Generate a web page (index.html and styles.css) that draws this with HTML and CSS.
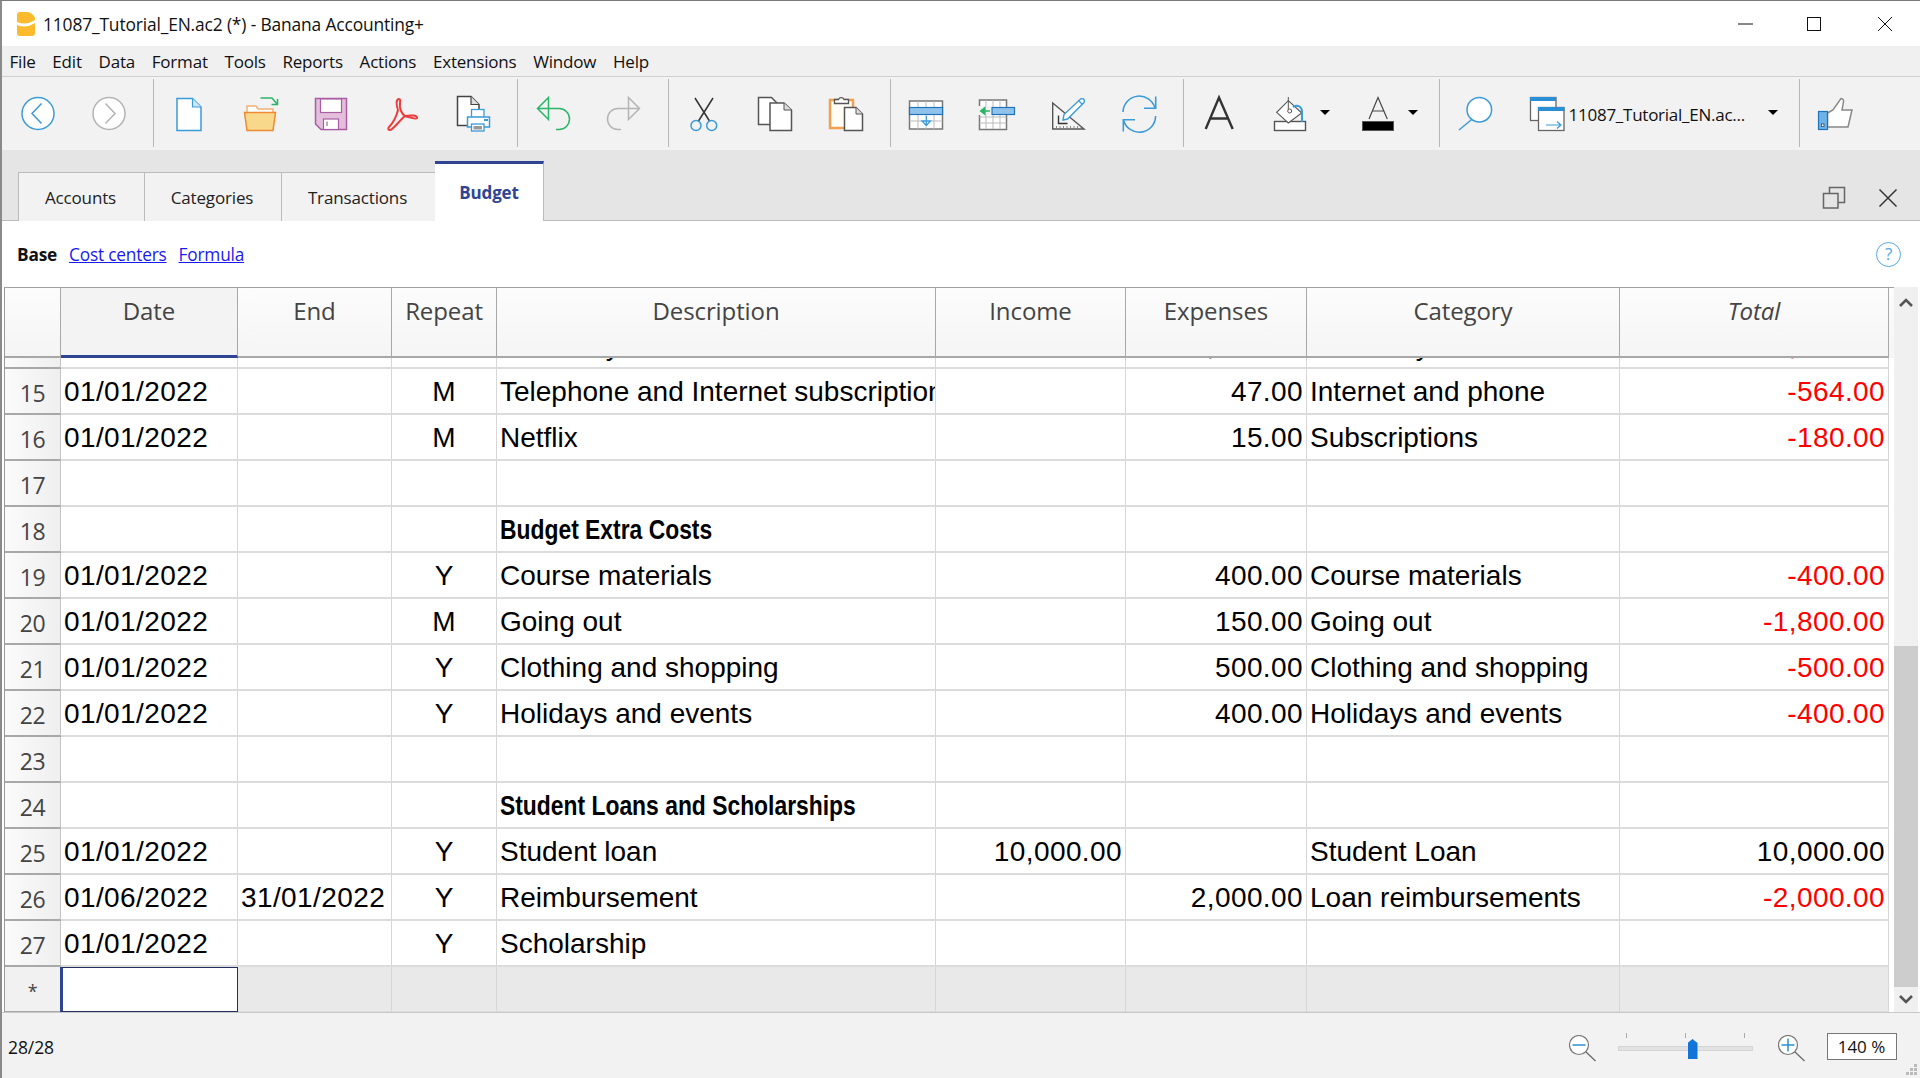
FILE: index.html
```html
<!DOCTYPE html>
<html lang="en">
  <head>
    <meta charset="UTF-8" />
    <title>11087_Tutorial_EN.ac2 (*) - Banana Accounting+</title>
    <link rel="stylesheet" href="styles.css">
  </head>
  <body>
    <div class="window">
      <!-- title bar -->
      <div class="titlebar">
        <svg class="logo" width="20" height="26" viewBox="0 0 20 26">
          <path d="M1 4 Q1 1 4 1 H11 Q14 1 16 3 L18 5 Q19 6 19 8 V22 Q19 25 16 25 H4 Q1 25 1 22 Z" fill="#fbbb2c" />
          <path d="M1 11 Q10 15 19 9 V12 Q10 18 1 14 Z" fill="#fff" />
        </svg>
        <span class="title">11087_Tutorial_EN.ac2 (*) - Banana Accounting+</span>
        <div class="winbtns">
          <svg width="16" height="16" viewBox="0 0 16 16"><path d="M0 8 H15" stroke="#111" fill="none" /></svg>
          <svg width="16" height="16" viewBox="0 0 16 16"><rect x="1.5" y="1.5" width="13" height="13" stroke="#111" fill="none" /></svg>
          <svg width="16" height="16" viewBox="0 0 16 16"><path d="M1 1 L15 15 M15 1 L1 15" stroke="#111" fill="none" /></svg>
        </div>
      </div>

      <!-- menu -->
      <div class="menubar">
        <span>File</span><span>Edit</span><span>Data</span><span>Format</span><span>Tools</span><span>Reports</span><span>Actions</span><span>Extensions</span><span>Window</span><span>Help</span>
      </div>

      <!-- toolbar -->
      <div class="toolbar">
        <div class="group first">
          <div class="tool"><svg width="44" height="44" viewBox="0 0 44 44"><circle cx="22" cy="22.5" r="16" fill="#fff" stroke="#3a9bd9" stroke-width="1.5" /><path d="M25.5 12.5 L16 22.5 L25.5 32.5" fill="none" stroke="#3a9bd9" stroke-width="1.5" /></svg></div>
          <div class="tool"><svg width="44" height="44" viewBox="0 0 44 44"><circle cx="22" cy="22.5" r="16" fill="#fff" stroke="#b3b3b3" stroke-width="1.5" /><path d="M18.5 12.5 L28 22.5 L18.5 32.5" fill="none" stroke="#b3b3b3" stroke-width="1.5" /></svg></div>
        </div>
        <div class="group">
          <div class="tool"><svg width="44" height="44" viewBox="0 0 44 44"><path d="M10 7.5 H25.5 L34 16 V39.5 H10 Z" fill="#fff" stroke="#3a9bd9" stroke-width="1.5" /><path d="M25.5 7.5 V16 H34" fill="#cfe6f7" stroke="#3a9bd9" stroke-width="1.2" /></svg></div>
          <div class="tool"><svg width="44" height="44" viewBox="0 0 44 44"><path d="M9 21.5 V15 H18 L20 18 H35 V21.5" fill="#fff" stroke="#f2b27a" stroke-width="1.5" /><path d="M6.5 21.5 H37.5 L35 39.5 H9 Z" fill="#f8d98c" stroke="#ee8a33" stroke-width="1.5" /><path d="M22.5 7 H34 L39.5 13.5 M39.5 8 V13.5 H33.5" fill="none" stroke="#2bb568" stroke-width="1.5" /></svg></div>
          <div class="tool"><svg width="44" height="44" viewBox="0 0 44 44"><path d="M6.5 7.5 H37.5 V38.5 H12 L6.5 33 Z" fill="#e3bfdc" stroke="#a85da5" stroke-width="1.5" /><rect x="11.5" y="8" width="21" height="13.5" fill="#fff" stroke="#a85da5" stroke-width="1.2" /><rect x="14.5" y="28" width="15" height="10.5" fill="#fff" stroke="#a85da5" stroke-width="1.2" /><path d="M18 30.5 V35" stroke="#999" stroke-width="1.5" /></svg></div>
          <div class="tool"><svg width="44" height="44" viewBox="0 0 44 44"><path d="M19 8 C16 8 16 14 18 19 C16 27 12 33 9 36 C7 39 10 40 12 38 C15 36 21 28 25 25 C29 26 36 29 37 27 C38 24 30 24 25 25 C22 23 19 18 20 12 C20.5 9 20 8 19 8 Z" fill="none" stroke="#ee3c3c" stroke-width="2" /></svg></div>
          <div class="tool"><svg width="44" height="44" viewBox="0 0 44 44"><path d="M6.5 5.5 H20 L28 13.5 V34.5 H6.5 Z" fill="#fff" stroke="#444" stroke-width="1.5" /><path d="M20 5.5 V13.5 H28" fill="#ddd" stroke="#444" stroke-width="1.2" /><rect x="20.5" y="18.5" width="12.5" height="8" fill="#fff" stroke="#3a9bd9" stroke-width="1.3" /><rect x="16.5" y="26" width="22" height="10" fill="#fff" stroke="#3a9bd9" stroke-width="1.5" /><rect x="20.5" y="33" width="12.5" height="7" fill="#fff" stroke="#3a9bd9" stroke-width="1.3" /><rect x="22.5" y="35" width="8.5" height="3.5" fill="#999" /><rect x="33" y="28" width="4" height="2" fill="#3a9bd9" /></svg></div>
        </div>
        <div class="group">
          <div class="tool"><svg width="44" height="44" viewBox="0 0 44 44"><path d="M17.5 6.5 L6.5 17.5 L17.5 28.5 Z M6.5 17.5 H28 A10.5 10.5 0 0 1 28 38.5 H25" fill="none" stroke="#2bb568" stroke-width="1.5" /></svg></div>
          <div class="tool"><svg width="44" height="44" viewBox="0 0 44 44"><path d="M26.5 6.5 L37.5 17.5 L26.5 28.5 Z M37.5 17.5 H16 A10.5 10.5 0 0 0 16 38.5 H19" fill="none" stroke="#b5b5b5" stroke-width="1.5" /></svg></div>
        </div>
        <div class="group">
          <div class="tool"><svg width="44" height="44" viewBox="0 0 44 44"><path d="M13 7 L27.5 30 M31 7 L16.5 30" fill="none" stroke="#333" stroke-width="1.5" /><circle cx="14" cy="34.5" r="5" fill="none" stroke="#3a9bd9" stroke-width="1.5" /><circle cx="29.7" cy="34.5" r="5" fill="none" stroke="#3a9bd9" stroke-width="1.5" /></svg></div>
          <div class="tool"><svg width="44" height="44" viewBox="0 0 44 44"><path d="M5.5 6.5 H18.5 L25 13 V33.5 H5.5 Z" fill="#fff" stroke="#555" stroke-width="1.5" /><path d="M17 12 H31 L38.5 19 V39.5 H17 Z" fill="#fff" stroke="#555" stroke-width="1.5" /><path d="M31 12 V19 H38.5" fill="#ddd" stroke="#555" /></svg></div>
          <div class="tool"><svg width="44" height="44" viewBox="0 0 44 44"><rect x="6" y="9" width="23" height="28" fill="#fffdf5" stroke="#f0a050" stroke-width="2.5" /><path d="M10.5 12.5 V8.5 H14.5 A3 3 0 0 1 20 8.5 H24.5 V12.5 Z" fill="#fff" stroke="#555" stroke-width="1.3" /><path d="M20.5 16.5 H32 L38.5 23 V39.5 H20.5 Z" fill="#fff" stroke="#555" stroke-width="1.5" /><path d="M32 16.5 V23 H38.5" fill="#ddd" stroke="#555" /></svg></div>
        </div>
        <div class="group">
          <div class="tool"><svg width="44" height="44" viewBox="0 0 44 44"><rect x="5.5" y="10" width="33" height="28" fill="#fff" stroke="#777" stroke-width="1.5" /><path d="M14 10 V38 M22 10 V38 M30 10 V38 M5.5 30 H38.5" stroke="#bbb" fill="none" /><rect x="5.5" y="16.5" width="33" height="7" fill="#8fc3ec" stroke="#1f74bb" stroke-width="1.2" /><rect x="18" y="25" width="8.5" height="11" fill="#fff" /><path d="M22.3 25 V34 M18 30 H26.5 L22.3 34.5 Z" fill="none" stroke="#3a9bd9" stroke-width="1.3" /></svg></div>
          <div class="tool"><svg width="44" height="44" viewBox="0 0 44 44"><rect x="4.5" y="9" width="27" height="29.5" fill="#fff" stroke="#777" stroke-width="1.5" /><path d="M11 9 V38 M18 9 V38 M25 9 V38 M4.5 26 H31.5 M4.5 32 H31.5" stroke="#bbb" fill="none" /><rect x="3" y="15" width="13" height="9" fill="#f2f2f2" /><rect x="17" y="16.5" width="22.5" height="7" fill="#8fc3ec" stroke="#1f74bb" stroke-width="1.2" /><path d="M15 20 H6 M10 16.5 L5.5 20 L10 23.5 Z" fill="#2bb568" stroke="#2bb568" stroke-width="1.3" /></svg></div>
          <div class="tool"><svg width="44" height="44" viewBox="0 0 44 44"><path d="M6.7 12 L38 38 H6.7 Z" fill="#f5f5f5" stroke="#555" stroke-width="1.4" /><path d="M12.5 24.5 V32.5 H21.5" fill="none" stroke="#333" stroke-width="1.4" /><path d="M10 36 H35" stroke="#888" stroke-dasharray="1 2.5" stroke-width="2" /><path d="M17 29 L18 23.5 L34.5 8 Q37 7 38 8.5 Q39 10 38 11.5 L21.5 28 Z" fill="#fff" stroke="#3a9bd9" stroke-width="1.4" /><path d="M33 10 L36.5 13.5" stroke="#3a9bd9" stroke-width="1.2" /></svg></div>
          <div class="tool"><svg width="44" height="44" viewBox="0 0 44 44"><path d="M6 21 A16.3 16.3 0 0 1 38 17 M38.6 25 A16.3 16.3 0 0 1 6.5 29 M38.7 5.5 V17.3 H27 M6.3 40.5 V28.7 H18" fill="none" stroke="#3a9bd9" stroke-width="1.6" /></svg></div>
        </div>
        <div class="group">
          <div class="tool"><svg width="44" height="44" viewBox="0 0 44 44"><path d="M8.7 38 L22 6.5 L35.7 38 M13 27.5 H31" fill="none" stroke="#333" stroke-width="2.4" /></svg></div>
          <div class="tool wide">
            <svg width="44" height="44" viewBox="0 0 44 44"><rect x="6.5" y="30.5" width="31" height="9" fill="#fff" stroke="#555" stroke-width="1.4" /><path d="M20.3 9.7 L33.7 22 L20.3 32 L8.7 21.3 Z" fill="#fff" stroke="#555" stroke-width="1.1" /><path d="M20.3 6 V19" stroke="#555" /><circle cx="21.7" cy="20" r="2" fill="#fff" stroke="#555" /><path d="M25 16 C30 13 34 16 34 21 V31" fill="none" stroke="#3a9bd9" stroke-width="2" /></svg>
            <span class="caret"></span>
          </div>
          <div class="tool wide">
            <svg width="44" height="44" viewBox="0 0 44 44"><path d="M13 28 L22 6.5 L31.3 28 M16 20 H28.5" fill="none" stroke="#444" stroke-width="1.2" /><rect x="6.5" y="30.5" width="31" height="9" fill="#000" stroke="#555" /></svg>
            <span class="caret"></span>
          </div>
        </div>
        <div class="group">
          <div class="tool"><svg width="44" height="44" viewBox="0 0 44 44"><circle cx="26.3" cy="18.7" r="12.3" fill="#fff" stroke="#3a9bd9" stroke-width="1.5" /><path d="M18.7 28.5 L6 39" stroke="#3a9bd9" stroke-width="1.5" /></svg></div>
          <div class="doccombo">
            <svg width="44" height="44" viewBox="0 0 44 44"><rect x="5.5" y="6.5" width="25.5" height="23" fill="#fff" stroke="#666" stroke-width="1.3" /><rect x="5" y="6" width="26" height="4" fill="#2b8fd6" /><rect x="13.5" y="16.5" width="25.5" height="23" fill="#fff" stroke="#666" stroke-width="1.3" /><rect x="13" y="16" width="26.5" height="4" fill="#2b8fd6" /><path d="M21 34 H36 M32 30.5 L36 34 L32 37.5" fill="none" stroke="#3a9bd9" stroke-width="1.2" /></svg>
            <span class="docname">11087_Tutorial_EN.ac...</span>
            <span class="caret"></span>
          </div>
        </div>
        <div class="group last">
          <div class="tool"><svg width="44" height="44" viewBox="0 0 44 44"><path d="M14.5 22 L20 19 L28 7.5 Q31 8 30.5 11 L29 19 H39 L35 36 H14.5 Z" fill="#fff" stroke="#888" stroke-width="1.5" /><rect x="5.5" y="20.5" width="9" height="18" fill="#6db3e8" stroke="#1f74bb" stroke-width="1.2" /><rect x="8.5" y="33" width="2.5" height="2.5" fill="#fff" stroke="#333" stroke-width=".7" /></svg></div>
        </div>
      </div>

      <!-- tabs -->
      <div class="tabbar">
        <div class="tab">Accounts</div>
        <div class="tab">Categories</div>
        <div class="tab">Transactions</div>
        <div class="tab active">Budget</div>
        <div class="tabtools">
          <svg width="24" height="24" viewBox="0 0 24 24"><path d="M7.5 7 V1.5 H22.5 V16.5 H16" fill="none" stroke="#666" stroke-width="1.5" /><rect x="1.5" y="7.5" width="14.5" height="14.5" fill="none" stroke="#666" stroke-width="1.5" /></svg>
          <svg width="20" height="20" viewBox="0 0 20 20"><path d="M1.5 1.5 L18.5 18.5 M18.5 1.5 L1.5 18.5" stroke="#333" stroke-width="1.5" fill="none" /></svg>
        </div>
      </div>

      <!-- views -->
      <div class="viewbar">
        <b>Base</b>
        <a href="#">Cost centers</a>
        <a href="#">Formula</a>
        <span class="help">?</span>
      </div>

      <!-- table -->
      <div class="sheet">
        <div class="grid">
          <div class="row head">
            <div class="cell gutter"></div>
            <div class="cell current">Date</div>
            <div class="cell">End</div>
            <div class="cell">Repeat</div>
            <div class="cell">Description</div>
            <div class="cell">Income</div>
            <div class="cell">Expenses</div>
            <div class="cell">Category</div>
            <div class="cell total">Total</div>
          </div>
          <div class="rows">
            <div class="scrolled">
              <div class="row"><div class="cell gutter">14</div><div class="cell date">01/01/2022</div><div class="cell date"></div><div class="cell mid">M</div><div class="cell">Electricity</div><div class="cell num"></div><div class="cell num">1,200.00</div><div class="cell">Electricity</div><div class="cell num neg">-14,400.00</div></div>
              <div class="row"><div class="cell gutter">15</div><div class="cell date">01/01/2022</div><div class="cell date"></div><div class="cell mid">M</div><div class="cell">Telephone and Internet subscription</div><div class="cell num"></div><div class="cell num">47.00</div><div class="cell">Internet and phone</div><div class="cell num neg">-564.00</div></div>
              <div class="row"><div class="cell gutter">16</div><div class="cell date">01/01/2022</div><div class="cell date"></div><div class="cell mid">M</div><div class="cell">Netflix</div><div class="cell num"></div><div class="cell num">15.00</div><div class="cell">Subscriptions</div><div class="cell num neg">-180.00</div></div>
              <div class="row"><div class="cell gutter">17</div><div class="cell"></div><div class="cell"></div><div class="cell"></div><div class="cell"></div><div class="cell"></div><div class="cell"></div><div class="cell"></div><div class="cell"></div></div>
              <div class="row"><div class="cell gutter">18</div><div class="cell"></div><div class="cell"></div><div class="cell"></div><div class="cell"><b class="section">Budget Extra Costs</b></div><div class="cell"></div><div class="cell"></div><div class="cell"></div><div class="cell"></div></div>
              <div class="row"><div class="cell gutter">19</div><div class="cell date">01/01/2022</div><div class="cell date"></div><div class="cell mid">Y</div><div class="cell">Course materials</div><div class="cell num"></div><div class="cell num">400.00</div><div class="cell">Course materials</div><div class="cell num neg">-400.00</div></div>
              <div class="row"><div class="cell gutter">20</div><div class="cell date">01/01/2022</div><div class="cell date"></div><div class="cell mid">M</div><div class="cell">Going out</div><div class="cell num"></div><div class="cell num">150.00</div><div class="cell">Going out</div><div class="cell num neg">-1,800.00</div></div>
              <div class="row"><div class="cell gutter">21</div><div class="cell date">01/01/2022</div><div class="cell date"></div><div class="cell mid">Y</div><div class="cell">Clothing and shopping</div><div class="cell num"></div><div class="cell num">500.00</div><div class="cell">Clothing and shopping</div><div class="cell num neg">-500.00</div></div>
              <div class="row"><div class="cell gutter">22</div><div class="cell date">01/01/2022</div><div class="cell date"></div><div class="cell mid">Y</div><div class="cell">Holidays and events</div><div class="cell num"></div><div class="cell num">400.00</div><div class="cell">Holidays and events</div><div class="cell num neg">-400.00</div></div>
              <div class="row"><div class="cell gutter">23</div><div class="cell"></div><div class="cell"></div><div class="cell"></div><div class="cell"></div><div class="cell"></div><div class="cell"></div><div class="cell"></div><div class="cell"></div></div>
              <div class="row"><div class="cell gutter">24</div><div class="cell"></div><div class="cell"></div><div class="cell"></div><div class="cell"><b class="section">Student Loans and Scholarships</b></div><div class="cell"></div><div class="cell"></div><div class="cell"></div><div class="cell"></div></div>
              <div class="row"><div class="cell gutter">25</div><div class="cell date">01/01/2022</div><div class="cell date"></div><div class="cell mid">Y</div><div class="cell">Student loan</div><div class="cell num">10,000.00</div><div class="cell num"></div><div class="cell">Student Loan</div><div class="cell num">10,000.00</div></div>
              <div class="row"><div class="cell gutter">26</div><div class="cell date">01/06/2022</div><div class="cell date">31/01/2022</div><div class="cell mid">Y</div><div class="cell">Reimbursement</div><div class="cell num"></div><div class="cell num">2,000.00</div><div class="cell">Loan reimbursements</div><div class="cell num neg">-2,000.00</div></div>
              <div class="row"><div class="cell gutter">27</div><div class="cell date">01/01/2022</div><div class="cell date"></div><div class="cell mid">Y</div><div class="cell">Scholarship</div><div class="cell"></div><div class="cell"></div><div class="cell"></div><div class="cell"></div></div>
              <div class="row newrow"><div class="cell gutter star">*</div><div class="cell selected"></div><div class="cell"></div><div class="cell"></div><div class="cell"></div><div class="cell"></div><div class="cell"></div><div class="cell"></div><div class="cell"></div></div>
            </div>
          </div>
        </div>
        <div class="scrollbar">
          <svg class="chev" width="14" height="9" viewBox="0 0 14 9"><path d="M1 8 L7 2 L13 8" fill="none" stroke="#555" stroke-width="2.6" /></svg>
          <div class="thumb"></div>
          <svg class="chev down" width="14" height="9" viewBox="0 0 14 9"><path d="M1 1 L7 7 L13 1" fill="none" stroke="#555" stroke-width="2.6" /></svg>
        </div>
      </div>

      <!-- status bar -->
      <div class="statusbar">
        <span class="count">28/28</span>
        <div class="zoomer">
          <svg class="lens" width="28" height="28" viewBox="0 0 28 28"><circle cx="10" cy="10" r="9.5" fill="#fff" stroke="#777" stroke-width="1.2" /><path d="M3.5 10 H16.5" stroke="#2b8fd6" stroke-width="1.5" /><path d="M17 17 L26.5 26" stroke="#666" stroke-width="1.2" /></svg>
          <div class="slider">
            <div class="ticks"><i></i><i></i><i></i></div>
            <div class="track"></div>
            <div class="handle"></div>
          </div>
          <svg class="lens" width="28" height="28" viewBox="0 0 28 28"><circle cx="10" cy="10" r="9.5" fill="#fff" stroke="#777" stroke-width="1.2" /><path d="M3.5 10 H16.5 M10 3.5 V16.5" stroke="#2b8fd6" stroke-width="1.5" /><path d="M17 17 L26.5 26" stroke="#666" stroke-width="1.2" /></svg>
          <div class="zoombox">140 %</div>
        </div>
        <svg class="grip" width="12" height="12" viewBox="0 0 12 12" fill="#bbb"><rect x="8" y="0" width="3" height="3" /><rect x="4" y="4" width="3" height="3" /><rect x="8" y="4" width="3" height="3" /><rect x="0" y="8" width="3" height="3" /><rect x="4" y="8" width="3" height="3" /><rect x="8" y="8" width="3" height="3" /></svg>
      </div>
    </div>
  </body>
</html>
```

FILE: styles.css
```css
* {
  box-sizing: border-box;
}
html,
body {
  margin: 0;
  padding: 0;
  background: #fff;
}
body {
  font-family: "Open Sans", "Noto Sans", sans-serif;
  color: #111;
  overflow: hidden;
}
.window {
  width: 1920px;
  height: 1078px;
  display: flex;
  flex-direction: column;
  border-top: 1px solid #7a7a7a;
  border-left: 2px solid #8a8a8a;
  overflow: hidden;
}

/* title bar */
.titlebar {
  height: 45px;
  flex: none;
  display: flex;
  align-items: center;
  padding-left: 14px;
  background: #fff;
}
.logo {
  margin-right: 7px;
}
.title {
  font-size: 17.4px;
  letter-spacing: -0.15px;
}
.winbtns {
  margin-left: auto;
  display: flex;
  gap: 55px;
  padding-right: 27px;
}
.winbtns svg:first-child {
  margin-right: -3px;
}

/* menu */
.menubar {
  height: 31px;
  flex: none;
  display: flex;
  align-items: center;
  gap: 16.75px;
  padding-left: 7.5px;
  background: #f0f0f0;
  border-bottom: 1px solid #d0d0d0;
  font-size: 17px;
  letter-spacing: -0.2px;
}

/* toolbar */
.toolbar {
  height: 73px;
  flex: none;
  display: flex;
  background: #f2f2f2;
}
.group {
  display: flex;
  align-items: center;
  padding-right: 8px;
  border-right: 1px solid #b8b8b8;
  margin: 2px 0 3px;
}
.group.first {
  padding-right: 8.5px;
}
.group.last {
  border-right: 0;
}
.tool {
  width: 71px;
  height: 44px;
  display: flex;
  justify-content: center;
  flex: none;
}
.tool.wide {
  width: 88px;
  justify-content: flex-start;
  align-items: center;
  padding-left: 13px;
}
.caret {
  width: 0;
  height: 0;
  border-left: 5px solid transparent;
  border-right: 5px solid transparent;
  border-top: 5px solid #000;
  margin-left: 8px;
  margin-top: -1px;
  flex: none;
}
.doccombo {
  display: flex;
  align-items: center;
  width: 280px;
  height: 44px;
  padding-left: 14px;
}
.docname {
  font-size: 17px;
  letter-spacing: -0.25px;
  width: 176px;
  white-space: nowrap;
  margin-top: 3px;
}
.doccombo .caret {
  margin-left: 23px;
}

/* tabs */
.tabbar {
  height: 71px;
  flex: none;
  display: flex;
  align-items: flex-end;
  padding-left: 16px;
  background: #e5e5e5;
  border-bottom: 1px solid #bbb;
}
.tab {
  height: 49px;
  display: flex;
  align-items: center;
  justify-content: center;
  font-size: 17px;
  background: #f2f2f2;
  border: 1px solid #bbb;
  border-bottom: 0;
  border-right: 0;
  letter-spacing: -0.15px;
  width: 126px;
  margin-bottom: -1px;
  padding: 1px 2px 0 0;
  color: #222;
}
.tab:nth-child(2) {
  width: 137px;
}
.tab:nth-child(3) {
  width: 154px;
}
.tab.active {
  width: 109px;
  height: 60px;
  background: #fff;
  border: 0;
  border-top: 3px solid #2f4593;
  border-right: 1px solid #bbb;
  color: #2f4593;
  font-weight: 700;
  padding: 0 0 1px;
}
.tabtools {
  margin-left: auto;
  display: flex;
  align-items: center;
  gap: 32px;
  padding-right: 22px;
  height: 46px;
  padding-top: 2px;
}

/* view links */
.viewbar {
  height: 66px;
  flex: none;
  display: flex;
  align-items: center;
  gap: 12px;
  padding-left: 15px;
  font-size: 17.3px;
  letter-spacing: -0.2px;
}
.viewbar a {
  color: #1a1aee;
}
.help {
  margin-left: auto;
  margin-right: 19px;
  width: 25px;
  height: 25px;
  border: 1.5px solid #55a7e4;
  border-radius: 50%;
  color: #55a7e4;
  text-align: center;
  font-size: 17px;
  line-height: 22px;
}

/* sheet */
.sheet {
  height: 726px;
  flex: none;
  display: flex;
  padding-left: 2px;
  border-bottom: 1px solid #c8c8c8;
}
.grid {
  width: 1890px;
  flex: none;
  display: flex;
  flex-direction: column;
  border-left: 1px solid #9a9a9a;
  border-top: 1px solid #a0a0a0;
}
.row {
  display: grid;
  grid-template-columns: 56px 177px 154px 105px 439px 190px 181px 313px 269px;
  height: 46px;
  font-family: "Liberation Sans", Arial, sans-serif;
  font-size: 28px;
  line-height: 45px;
  color: #000;
}
.cell {
  border-right: 1px solid #d6d6d6;
  border-bottom: 2px solid #dcdcdc;
  padding: 0 3px;
  white-space: nowrap;
  overflow: hidden;
}
.num,
.date {
  letter-spacing: 0.4px;
}
.num {
  text-align: right;
}
.mid {
  text-align: center;
}
.neg {
  color: #ff0000;
}
.section {
  display: inline-block;
  font-size: 27px;
  transform: scaleX(0.847);
  transform-origin: left center;
}
.gutter {
  font-family: "Open Sans", "Noto Sans", sans-serif;
  font-size: 23px;
  line-height: 48px;
  letter-spacing: -0.5px;
  text-align: center;
  color: #444;
  background: linear-gradient(to right, #fbfbfb, #efefef);
  border-bottom: 2px solid #a8a8a8;
  border-right: 1px solid #c4c4c4;
}
.head {
  height: 70px;
  font-family: "Open Sans", "Noto Sans", sans-serif;
  font-size: 24px;
  line-height: 46px;
  letter-spacing: -0.1px;
  color: #444;
  background: linear-gradient(to bottom, #fcfcfc, #f5f5f5);
}
.head .cell {
  text-align: center;
  border-right: 1px solid #a8a8a8;
  border-bottom: 2px solid #a8a8a8;
  background: none;
}
.head .current {
  background: #f3f3f3;
  border-bottom: 3px solid #2f4593;
}
.head .total {
  font-style: italic;
}
.rows {
  flex: 1;
  overflow: hidden;
}
.scrolled {
  margin-top: -35px;
}
.newrow .cell {
  background: #e9e9e9;
}
.newrow .gutter {
  background: #f1f1f1;
}
.star {
  font-size: 18px;
}
.newrow .selected {
  background: #fff;
  border: 1px solid #23305f;
  border-left: 3px solid #2f4593;
  height: 45px;
  margin-left: -1px;
}

/* scrollbar */
.scrollbar {
  width: 24px;
  flex: none;
  display: flex;
  flex-direction: column;
  align-items: center;
  background: #f0f0f0;
}
.chev {
  flex: none;
  margin: 11px 0;
}
.chev.down {
  margin: 8px 0 8px;
}
.thumb {
  width: 100%;
  margin-top: 328px;
  flex: 1;
  background: #cdcdcd;
}

/* status bar */
.statusbar {
  flex: 1;
  position: relative;
  display: flex;
  align-items: center;
  background: #f2f2f2;
  padding: 0 23.5px 0 6px;
}
.count {
  font-size: 17.5px;
  letter-spacing: -0.1px;
  margin-top: 3px;
}
.zoomer {
  margin-left: auto;
  display: flex;
  align-items: center;
  margin-top: 2px;
}
.lens {
  margin-top: 4px;
}
.slider {
  position: relative;
  width: 135px;
  height: 27px;
  margin: 0 25px 0 21px;
}
.ticks {
  display: flex;
  justify-content: space-between;
  padding: 0 8px;
}
.ticks i {
  width: 1px;
  height: 5px;
  background: #aaa;
}
.track {
  height: 5px;
  margin-top: 8px;
  background: #e2e2e2;
  border: 1px solid #d4d4d4;
}
.handle {
  position: absolute;
  left: 70px;
  top: 6px;
  width: 10px;
  height: 20px;
  background: #1274d8;
  clip-path: polygon(0 4px, 50% 0, 100% 4px, 100% 100%, 0 100%);
}
.zoombox {
  width: 70px;
  height: 27px;
  margin-left: 21px;
  background: #fff;
  border: 1px solid #777;
  text-align: center;
  font-size: 17px;
  line-height: 25px;
}
.grip {
  position: absolute;
  right: 2px;
  bottom: 2px;
}
```
